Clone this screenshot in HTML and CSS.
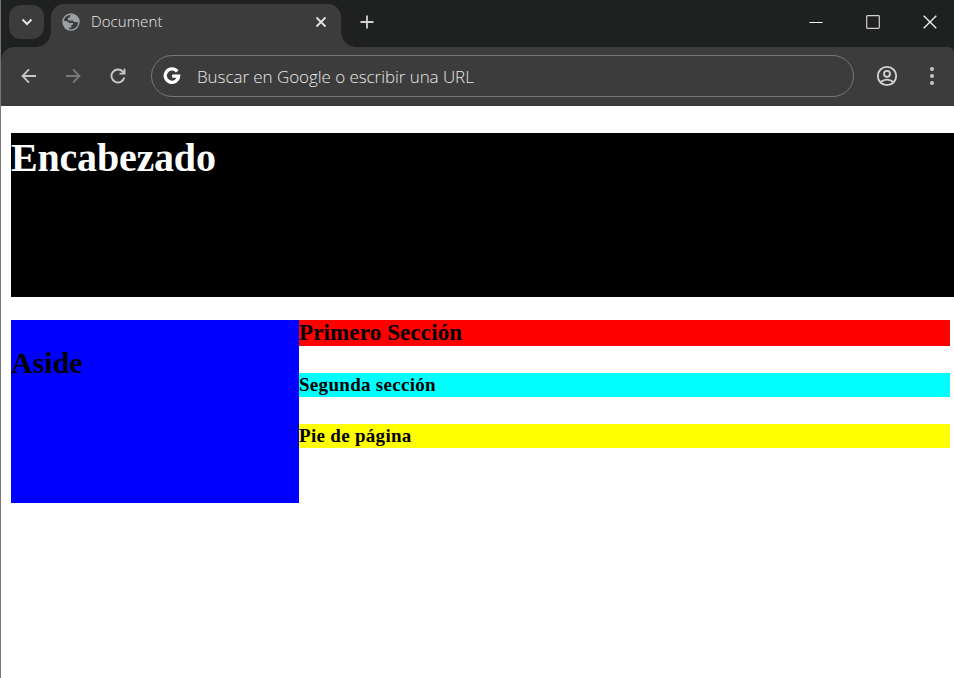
FILE: index.html
```html
<!DOCTYPE html>
<html lang="es">
<head>
<meta charset="utf-8">
<title>Document</title>
<link rel="stylesheet" href="styles.css">
</head>
<body>
<div class="window">
  <div class="tabstrip">
    <button class="tab-search" aria-label="Buscar pestañas">
      <svg width="12" height="8" viewBox="0 0 12 8"><path d="M1.500 1.500 6 6l4.500-4.500" fill="none" stroke="#e3e3e3" stroke-width="2"/></svg>
    </button>
    <div class="tab">
      <svg class="globe" width="18" height="18" viewBox="0 0 18 18"><circle cx="9" cy="9" r="8.700" fill="#9aa0a6"/><path d="M9.500 1.700C8 2 7.700 3 7.900 4.300L6 5.100v2.300h4.500c1 0 1.200.8 1.200 1.700h2.100c1.300-.1 1.700.3 2.500.6A7.400 7.400 0 0 1 7.200 16.100v-1.700h2.200v-2.300l1.600-.5V10H7.100C6.200 8.500 4.100 7.800 1.700 7.800A7.400 7.400 0 0 1 9.500 1.700Z" fill="#3c3c3c"/><path d="M8.800 2.200h2l2.300 1.300-.8 2.200-2.100.1-.7-1.300H8Z" fill="#9aa0a6"/></svg>
      <span class="tab-title">Document</span>
      <svg class="tab-close" width="12" height="12" viewBox="0 0 12 12"><path d="m1.500 1.500 9 9m0-9-9 9" stroke="#e3e3e3" stroke-width="1.800"/></svg>
    </div>
    <svg class="new-tab" width="14" height="14" viewBox="0 0 14 14"><path d="M7 .5v13M.5 7h13" stroke="#d2d2ce" stroke-width="1.800"/></svg>
    <div class="controls">
      <svg width="14" height="14" viewBox="0 0 14 14"><path d="M.5 7.500h13" stroke="#fff"/></svg>
      <svg width="14" height="14" viewBox="0 0 14 14"><rect x=".7" y=".7" width="12.600" height="12.600" rx=".8" fill="none" stroke="#d0d0d0" stroke-width="1.200"/></svg>
      <svg width="14" height="14" viewBox="0 0 14 14"><path d="m.7.7 12.600 12.600m0-12.600L.7 13.300" stroke="#f4f4f4" stroke-width="1.300"/></svg>
    </div>
  </div>
  <div class="toolbar">
    <svg class="back" width="16" height="16" viewBox="0 0 16 16"><path d="M15 8H1.800M8 1.300 1.500 8 8 14.700" fill="none" stroke="#c7c7c7" stroke-width="1.800"/></svg>
    <svg class="forward" width="16" height="16" viewBox="0 0 16 16"><path d="M1 8h13.200M8 1.300 14.500 8 8 14.700" fill="none" stroke="#7b7b7b" stroke-width="1.800"/></svg>
    <svg class="reload" width="16" height="16" viewBox="0 0 16 16"><path d="M14.300 9.500A6.500 6.500 0 1 1 12.800 3.600L14.300 5.300M9.500 5.600h5V.8" fill="none" stroke="#c7c7c7" stroke-width="1.900"/></svg>
    <div class="omnibox">
      <svg class="google" width="18" height="18" viewBox="0 0 18 18"><path d="M14.200 4.500A6.700 6.700 0 1 0 15.600 9.200H9.200" fill="none" stroke="#fff" stroke-width="3.300"/></svg>
      <span class="placeholder">Buscar en Google o escribir una URL</span>
    </div>
    <svg class="profile" width="22" height="22" viewBox="0 0 22 22" fill="none" stroke="#d4d4d4" stroke-width="1.800"><circle cx="11" cy="11" r="9.200"/><circle cx="11" cy="8.800" r="3"/><path d="M4.500 17Q11 12.200 17.500 17"/></svg>
    <svg class="menu" width="4" height="18" viewBox="0 0 4 18" fill="#c7c7c7"><circle cx="2" cy="2" r="2"/><circle cx="2" cy="9" r="2"/><circle cx="2" cy="16" r="2"/></svg>
  </div>
  <div class="page">
    <header class="header"><h1>Encabezado</h1></header>
    <div class="columns">
      <aside class="aside"><h2>Aside</h2></aside>
      <main class="main">
        <section class="first"><h3>Primero Sección</h3></section>
        <section class="second"><h4>Segunda sección</h4></section>
        <footer class="footer"><h4>Pie de página</h4></footer>
      </main>
    </div>
  </div>
</div>
</body>
</html>
```
FILE: styles.css
```css
* { box-sizing: border-box; }
body { margin: 0; background: #fff; overflow: hidden; }
svg { display: block; flex: none; }
h1, h2, h3, h4 { margin: 0; font-weight: bold; white-space: nowrap; }

.window {
  height: 678px;
  border-left: 1px solid #777;
  background: linear-gradient(#1f2120 0 70px, #fff 70px);
  font-family: "Liberation Serif", serif;
}

.tabstrip {
  display: flex;
  height: 47px;
}
.tab-search {
  display: grid;
  place-items: center;
  width: 35px;
  height: 34px;
  margin: 5px 7px 0 8px;
  padding: 0;
  border: 0;
  border-radius: 12px;
  background: #3c3c3c;
}
.tab {
  position: relative;
  display: flex;
  align-items: center;
  width: 290px;
  height: 43px;
  margin-top: 4px;
  padding: 0 14px 7px 11px;
  border-radius: 13px 13px 0 0;
  background: #3c3c3c;
}
.tab::before, .tab::after {
  content: "";
  position: absolute;
  bottom: 0;
  width: 15px;
  height: 15px;
}
.tab::before {
  left: -15px;
  background: radial-gradient(circle at 0 0, transparent 14.500px, #3c3c3c 15px);
}
.tab::after {
  right: -15px;
  background: radial-gradient(circle at 100% 0, transparent 14.500px, #3c3c3c 15px);
}
.tab-title {
  margin: -2px 0 0 11px;
  color: #e8e8e8;
  font: 300 15px/20px "Open Sans", sans-serif;
  letter-spacing: 0.1px;
}
.tab-close { margin-left: auto; }
.new-tab { margin: 15px 0 0 19px; }
.controls {
  display: flex;
  gap: 43px;
  margin: 15px 17px 0 auto;
}

.toolbar {
  display: flex;
  align-items: center;
  height: 59px;
  padding: 0 20px 1px 20px;
  border-radius: 14px 6px 0 0;
  background: #3c3c3c;
}
.forward { margin-left: 28px; }
.reload { margin-left: 29px; }
.omnibox {
  display: flex;
  align-items: center;
  width: 703px;
  height: 42px;
  margin-left: 25px;
  padding-left: 11px;
  border: 1px solid #777;
  border-radius: 21px;
}
.placeholder {
  margin: 2px 0 0 16px;
  color: #e8e8e8;
  font: 300 17px/24px "Open Sans", sans-serif;
  letter-spacing: -0.06px;
  white-space: nowrap;
}
.profile { margin-left: 22px; }
.menu { margin-left: auto; }

.page { padding: 27px 0 0 10px; }
.header {
  height: 164px;
  padding-top: 1px;
  background: #000;
  color: #fff;
}
.header h1 { font-size: 40px; line-height: 48px; letter-spacing: -0.2px; }
.columns {
  display: flex;
  align-items: flex-start;
  margin-top: 23px;
  padding-right: 4px;
}
.aside {
  width: 288px;
  height: 183px;
  padding-top: 26px;
  background: #00f;
}
.aside h2 { font-size: 30px; line-height: 34px; }
.main {
  flex: 1;
  display: flex;
  flex-direction: column;
  gap: 27px;
}
.first { height: 26px; background: #f00; }
.first h3 { font-size: 23px; line-height: 26px; letter-spacing: 0.14px; }
.second { height: 24px; background: #0ff; }
.footer { height: 24px; background: #ff0; }
.second h4, .footer h4 { font-size: 19px; line-height: 24px; letter-spacing: 0.3px; }
```
